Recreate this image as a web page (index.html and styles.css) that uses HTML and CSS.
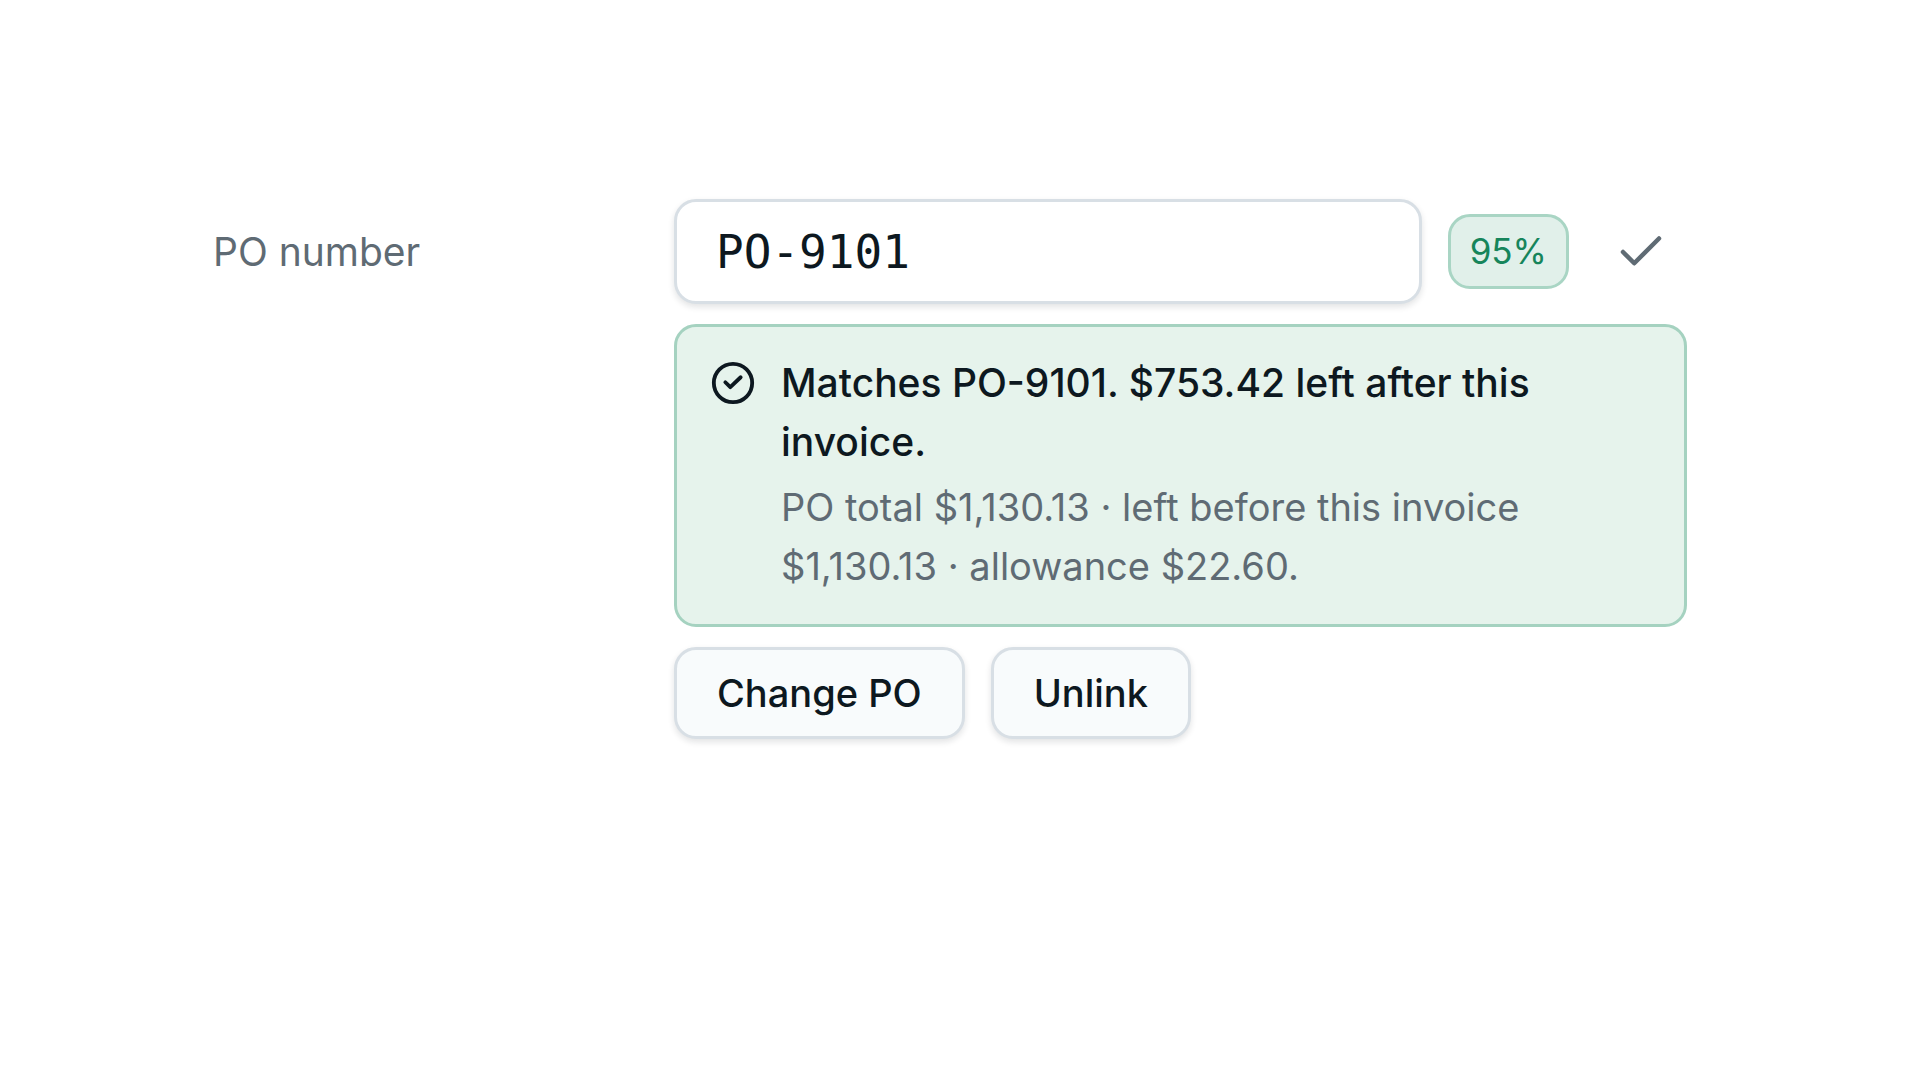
FILE: index.html
```
<!DOCTYPE html>
<html lang="en">
<head>
    <meta charset="UTF-8">
    <title>PO number</title>
    <link rel="stylesheet" href="styles.css">
</head>
<body>
    <form class="field">
        <label class="field-label" for="po_number">PO number</label>
        <div class="field-main">
            <div class="field-row">
                <input class="field-input" id="po_number" type="text" value="PO-9101">
                <span class="badge">95%</span>
                <button class="confirm" type="button" aria-label="Confirm">
                    <svg viewBox="0 0 24 24"><path d="M20 6 9 17l-5-5"/></svg>
                </button>
            </div>
            <div class="match">
                <svg class="match-icon" viewBox="0 0 24 24">
                    <circle cx="12" cy="12" r="10"/>
                    <path d="M8 11.6l2.6 2.6L16 9"/>
                </svg>
                <div class="match-text">
                    <p class="match-title">Matches PO-9101. $753.42 left after this invoice.</p>
                    <p class="match-detail">PO total $1,130.13 · left before this invoice $1,130.13 · allowance $22.60.</p>
                </div>
            </div>
            <div class="actions">
                <button class="btn" type="button">Change PO</button>
                <button class="btn" type="button">Unlink</button>
            </div>
        </div>
    </form>
</body>
</html>
```
FILE: styles.css
```
*{
    margin: 0;
    padding: 0;
    box-sizing: border-box;
}
body{
    background-color: #fff;
    color: #0d1820;
    font-family: Inter, "Liberation Sans", sans-serif;
    font-size: 39px;
    line-height: 59px;
}
svg{
    display: block;
    fill: none;
    stroke: currentColor;
    stroke-width: 2;
    stroke-linecap: round;
    stroke-linejoin: round;
}
.field{
    display: grid;
    grid-template-columns: 435px 1fr;
    gap: 26px;
    align-items: start;
    padding: 199px 233px 199px 213px;
}
.field-label{
    padding: 23px 0;
    color: #5f6b74;
}
.field-main{
    display: flex;
    flex-direction: column;
    gap: 20px;
}
.field-row{
    display: flex;
    align-items: center;
    gap: 26px;
}
.field-input{
    flex: 1;
    min-width: 0;
    height: 105px;
    padding: 0 39px;
    border: 3px solid #d8dfe5;
    border-radius: 22px;
    background-color: #fff;
    box-shadow: 0 3px 6px rgba(15, 23, 32, .12);
    color: inherit;
    font-family: "DejaVu Sans Mono", "Liberation Mono", monospace;
    font-size: 46px;
}
.badge{
    padding: 7px 19px;
    border: 3px solid #a9d5c4;
    border-radius: 22px;
    background-color: #e1f0ea;
    color: #16855b;
    font-size: 35px;
    line-height: 55px;
}
.confirm{
    width: 92px;
    height: 92px;
    padding: 19px;
    border: none;
    background: none;
    color: #5f6b74;
}
.match{
    display: flex;
    gap: 25px;
    padding: 26px 33px 28px;
    border: 3px solid #a5d2c0;
    border-radius: 22px;
    background-color: #e6f3ec;
}
.match-icon{
    flex: none;
    width: 46px;
    height: 46px;
    margin-top: 7px;
}
.match-text{
    display: flex;
    flex-direction: column;
    gap: 7px;
}
.match-title{
    font-weight: 500;
}
.match-detail{
    color: #5f6b74;
    font-size: 38px;
}
.actions{
    display: flex;
    gap: 26px;
}
.btn{
    height: 92px;
    padding: 0 40px;
    border: 3px solid #d8dfe5;
    border-radius: 22px;
    background-color: #f8fbfc;
    box-shadow: 0 3px 6px rgba(15, 23, 32, .12);
    color: inherit;
    font: inherit;
    font-size: 38px;
    font-weight: 500;
}
```
